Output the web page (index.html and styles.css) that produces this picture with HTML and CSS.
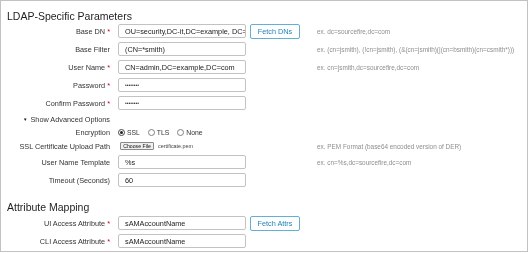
FILE: index.html
```html
<!DOCTYPE html>
<html lang="en">
<head>
<meta charset="utf-8">
<title>LDAP-Specific Parameters</title>
<link rel="stylesheet" href="styles.css">
</head>
<body>
<div class="panel">
  <h2 class="section-title first">LDAP-Specific Parameters</h2>

  <div class="row">
    <label class="lbl" for="basedn">Base DN <span class="req">*</span></label>
    <input class="field" id="basedn" type="text" value="OU=security,DC-it,DC=example, DC=com">
    <span class="btn-cell"><button class="btn" type="button">Fetch DNs</button></span>
    <span class="hint">ex. dc=sourcefire,dc=com</span>
  </div>
  <div class="row">
    <label class="lbl" for="basefilter">Base Filter</label>
    <input class="field" id="basefilter" type="text" value="(CN=*smith)">
    <span class="btn-cell"></span>
    <span class="hint">ex. (cn=jsmith), (!cn=jsmith), (&amp;(cn=jsmith)(|(cn=bsmith)(cn=csmith*)))</span>
  </div>
  <div class="row">
    <label class="lbl" for="username">User Name <span class="req">*</span></label>
    <input class="field" id="username" type="text" value="CN=admin,DC=example,DC=com">
    <span class="btn-cell"></span>
    <span class="hint">ex. cn=jsmith,dc=sourcefire,dc=com</span>
  </div>
  <div class="row">
    <label class="lbl" for="password">Password <span class="req">*</span></label>
    <input class="field pw" id="password" type="password" value="password">
    <span class="btn-cell"></span>
    <span class="hint"></span>
  </div>
  <div class="row">
    <label class="lbl" for="confirm">Confirm Password <span class="req">*</span></label>
    <input class="field pw" id="confirm" type="password" value="password">
    <span class="btn-cell"></span>
    <span class="hint"></span>
  </div>

  <div class="row adv">
    <span class="toggle"><span class="tri">&#9660;</span>Show Advanced Options</span>
  </div>

  <div class="row enc">
    <span class="lbl">Encryption</span>
    <div class="radios">
      <span class="opt"><span class="radio on"></span>SSL</span>
      <span class="opt"><span class="radio"></span>TLS</span>
      <span class="opt"><span class="radio"></span>None</span>
    </div>
  </div>

  <div class="row cert">
    <span class="lbl">SSL Certificate Upload Path</span>
    <div class="file">
      <span class="choose">Choose File</span>
      <span class="fname">certificate.pem</span>
    </div>
    <span class="hint">ex. PEM Format (base64 encoded version of DER)</span>
  </div>

  <div class="row">
    <label class="lbl" for="template">User Name Template</label>
    <input class="field" id="template" type="text" value="%s">
    <span class="btn-cell"></span>
    <span class="hint">ex. cn=%s,dc=sourcefire,dc=com</span>
  </div>
  <div class="row">
    <label class="lbl" for="timeout">Timeout (Seconds)</label>
    <input class="field" id="timeout" type="text" value="60">
    <span class="btn-cell"></span>
    <span class="hint"></span>
  </div>

  <h2 class="section-title second">Attribute Mapping</h2>

  <div class="row">
    <label class="lbl" for="uiattr">UI Access Attribute <span class="req">*</span></label>
    <input class="field" id="uiattr" type="text" value="sAMAccountName">
    <span class="btn-cell"><button class="btn" type="button">Fetch Attrs</button></span>
    <span class="hint"></span>
  </div>
  <div class="row">
    <label class="lbl" for="cliattr">CLI Access Attribute <span class="req">*</span></label>
    <input class="field" id="cliattr" type="text" value="sAMAccountName">
    <span class="btn-cell"></span>
    <span class="hint"></span>
  </div>
</div>
</body>
</html>
```
FILE: styles.css
```css
html, body {
  margin: 0;
  padding: 0;
  background: #ffffff;
}

body {
  font-family: "Liberation Sans", Arial, sans-serif;
  color: #333333;
}

.panel {
  width: 528px;
  height: 252px;
  box-sizing: border-box;
  border: 1px solid #c2c2c2;
  overflow: hidden;
  will-change: transform;
}

.section-title {
  margin: 0;
  font-weight: normal;
  font-size: 10.5px;
  color: #1e1e1e;
  padding-left: 6px;
}

.section-title.first {
  padding-top: 9px;
  line-height: 12px;
}

.section-title.second {
  padding-top: 12px;
  line-height: 13px;
}

.row {
  display: grid;
  grid-template-columns: 117px 128px 54px 1fr;
  align-items: center;
  height: 18px;
}

.lbl {
  font-size: 7.3px;
  color: #333333;
  text-align: right;
  padding-right: 8px;
  white-space: nowrap;
}

.req {
  color: #d0021b;
}

.field {
  box-sizing: border-box;
  width: 128px;
  height: 14px;
  margin: 0;
  padding: 0 0 0 6px;
  border: 1px solid #c2c2c2;
  border-radius: 2px;
  font-family: "Liberation Sans", Arial, sans-serif;
  font-size: 7.3px;
  color: #222222;
  background: #ffffff;
  outline: none;
}

.field.pw {
  font-size: 5px;
  color: #333333;
}

.btn-cell {
  display: flex;
  padding-left: 4px;
}

.btn {
  box-sizing: border-box;
  width: 50px;
  height: 15px;
  margin: 0;
  padding: 0;
  border: 1px solid #62b0d6;
  border-radius: 2px;
  background: #ffffff;
  color: #1f84b8;
  font-family: "Liberation Sans", Arial, sans-serif;
  font-size: 7.3px;
}

.hint {
  padding-left: 17px;
  font-size: 6.4px;
  color: #8e8e8e;
  white-space: nowrap;
}

.row.adv {
  height: 14px;
  display: flex;
}

.toggle {
  padding-left: 22px;
  font-size: 7.3px;
  color: #333333;
  white-space: nowrap;
}

.tri {
  font-size: 4.5px;
  color: #111111;
  margin-right: 3px;
  vertical-align: 1px;
}

.row.enc {
  height: 13px;
}

.radios {
  grid-column: 2 / 5;
  display: flex;
  align-items: center;
  gap: 8px;
  font-size: 6.8px;
  color: #333333;
}

.opt {
  display: flex;
  align-items: center;
  gap: 2px;
}

.radio {
  box-sizing: border-box;
  width: 7px;
  height: 7px;
  border: 1px solid #808080;
  border-radius: 50%;
  background: #ffffff;
  display: flex;
  align-items: center;
  justify-content: center;
}

.radio.on {
  border-color: #444444;
}

.radio.on::after {
  content: "";
  width: 3px;
  height: 3px;
  border-radius: 50%;
  background: #222222;
}

.row.cert {
  height: 14px;
}

.file {
  grid-column: 2 / 4;
  display: flex;
  align-items: center;
  gap: 4px;
  padding-left: 2px;
}

.choose {
  box-sizing: border-box;
  width: 34px;
  height: 8px;
  border: 1px solid #8a8a8a;
  border-radius: 1px;
  background: #efefef;
  font-size: 5.2px;
  color: #111111;
  display: flex;
  align-items: center;
  justify-content: center;
}

.fname {
  font-size: 5.4px;
  color: #444444;
}
```
